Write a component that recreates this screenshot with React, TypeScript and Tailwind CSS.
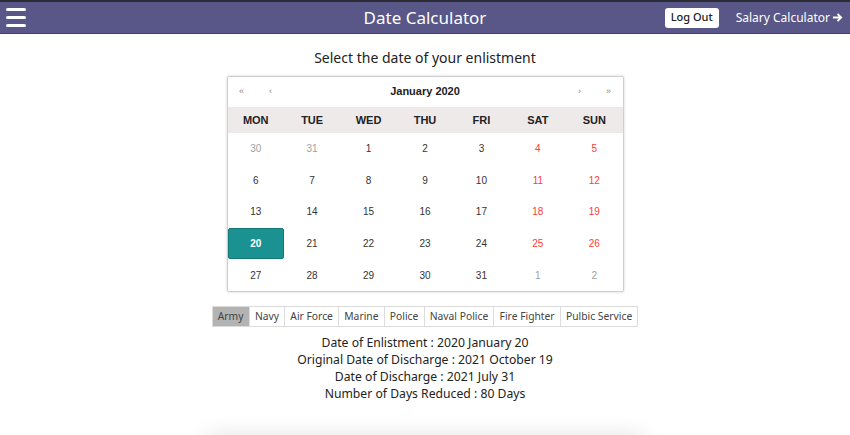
import * as React from 'react';
import { useState } from 'react';

const weekDays = ['MON', 'TUE', 'WED', 'THU', 'FRI', 'SAT', 'SUN'];
const services = [
  'Army',
  'Navy',
  'Air Force',
  'Marine',
  'Police',
  'Naval Police',
  'Fire Fighter',
  'Pulbic Service'
];

type Day = { n: number; cur: boolean };

function buildDays(): Day[] {
  const days: Day[] = [{ n: 30, cur: false }, { n: 31, cur: false }];
  for (let i = 1; i <= 31; i++) days.push({ n: i, cur: true });
  days.push({ n: 1, cur: false }, { n: 2, cur: false });
  return days;
}

export default function App() {
  const [selected, setSelected] = useState(20);
  const [service, setService] = useState('Army');
  const days = buildDays();

  return (
    <div className="min-h-screen bg-white font-['Noto_Sans',sans-serif] text-[#333]">
      <header className="h-[34px] bg-[#585787] border-t-2 border-t-[#2b2b35] border-b border-b-[#3f3e6a] grid grid-cols-[1fr_auto_1fr] items-center px-[6px]">
        <div>
          <button className="flex flex-col gap-[5px] w-[20px]">
            <span className="block h-[3px] w-full bg-white rounded-sm" />
            <span className="block h-[3px] w-full bg-white rounded-sm" />
            <span className="block h-[3px] w-full bg-white rounded-sm" />
          </button>
        </div>
        <h1 className="text-center text-white text-[17px] leading-none">
          Date Calculator
        </h1>
        <div className="flex items-center justify-end">
          <button className="bg-white text-[#222] text-[11px] font-medium h-[20px] px-[6px] rounded-[3px] mr-[17px]">
            Log Out
          </button>
          <a className="text-white text-[12px] flex items-center gap-[2px] mr-[1px]">
            Salary Calculator
            <svg width="11" height="11" viewBox="0 0 12 12" fill="none" stroke="white" strokeWidth="2">
              <path d="M1 6h9M6 2l4 4-4 4" />
            </svg>
          </a>
        </div>
      </header>

      <main className="flex flex-col items-center">
        <p className="mt-[13px] text-[14px] leading-[22px] text-[#222]">
          Select the date of your enlistment
        </p>

        <div className="mt-[7px] w-[397px] border border-[#cfcfcf] shadow-[0_0_3px_rgba(0,0,0,0.18)] rounded-[2px] font-['Liberation_Sans',Arial,sans-serif] bg-white">
          <div className="h-[30px] flex items-center text-[#888] text-[9px]">
            <span className="w-[28px] text-center">«</span>
            <span className="w-[30px] text-center">‹</span>
            <span className="flex-1 text-center text-[11px] font-bold text-[#222] -mt-[2px]">
              January 2020
            </span>
            <span className="w-[30px] text-center">›</span>
            <span className="w-[28px] text-center">»</span>
          </div>
          <div className="h-[26px] bg-[#eeeae9] grid grid-cols-7 items-center text-center text-[11px] font-bold text-[#222]">
            {weekDays.map((d) => (
              <span key={d}>{d}</span>
            ))}
          </div>
          <div className="grid grid-cols-7 text-center text-[10px]">
            {days.map((d, i) => {
              const weekend = i % 7 >= 5;
              const isSel = d.cur && d.n === selected;
              let color = 'text-[#333]';
              if (!d.cur) color = 'text-[#a0a0a0]';
              else if (weekend) color = 'text-[#ff3b3b]';
              return (
                <button
                  key={i}
                  onClick={() => d.cur && setSelected(d.n)}
                  className={
                    isSel
                      ? 'h-[31.6px] flex items-center justify-center bg-[#1b9292] text-white font-bold rounded-[2px] border border-[#157878]'
                      : `h-[31.6px] flex items-center justify-center ${color}`
                  }
                >
                  {d.n}
                </button>
              );
            })}
          </div>
        </div>

        <div className="mt-[14px] flex border border-[#dcdcdc] text-[10.3px] text-[#444]">
          {services.map((s, i) => (
            <button
              key={s}
              onClick={() => setService(s)}
              className={`h-[19px] px-[5.2px] leading-[19px] ${i > 0 ? 'border-l border-[#dcdcdc]' : ''} ${
                service === s ? 'bg-[#b3b3b3]' : 'bg-white'
              }`}
            >
              {s}
            </button>
          ))}
        </div>

        <div className="mt-[7px] text-center text-[12.2px] leading-[17px] text-[#222]">
          <p>Date of Enlistment : 2020 January 20</p>
          <p>Original Date of Discharge : 2021 October 19</p>
          <p>Date of Discharge : 2021 July 31</p>
          <p>Number of Days Reduced : 80 Days</p>
        </div>

        <div className="mt-[34px] w-[440px] h-[200px] bg-white shadow-[0_0_22px_rgba(0,0,0,0.12)] rounded-[6px]" />
      </main>
    </div>
  );
}
